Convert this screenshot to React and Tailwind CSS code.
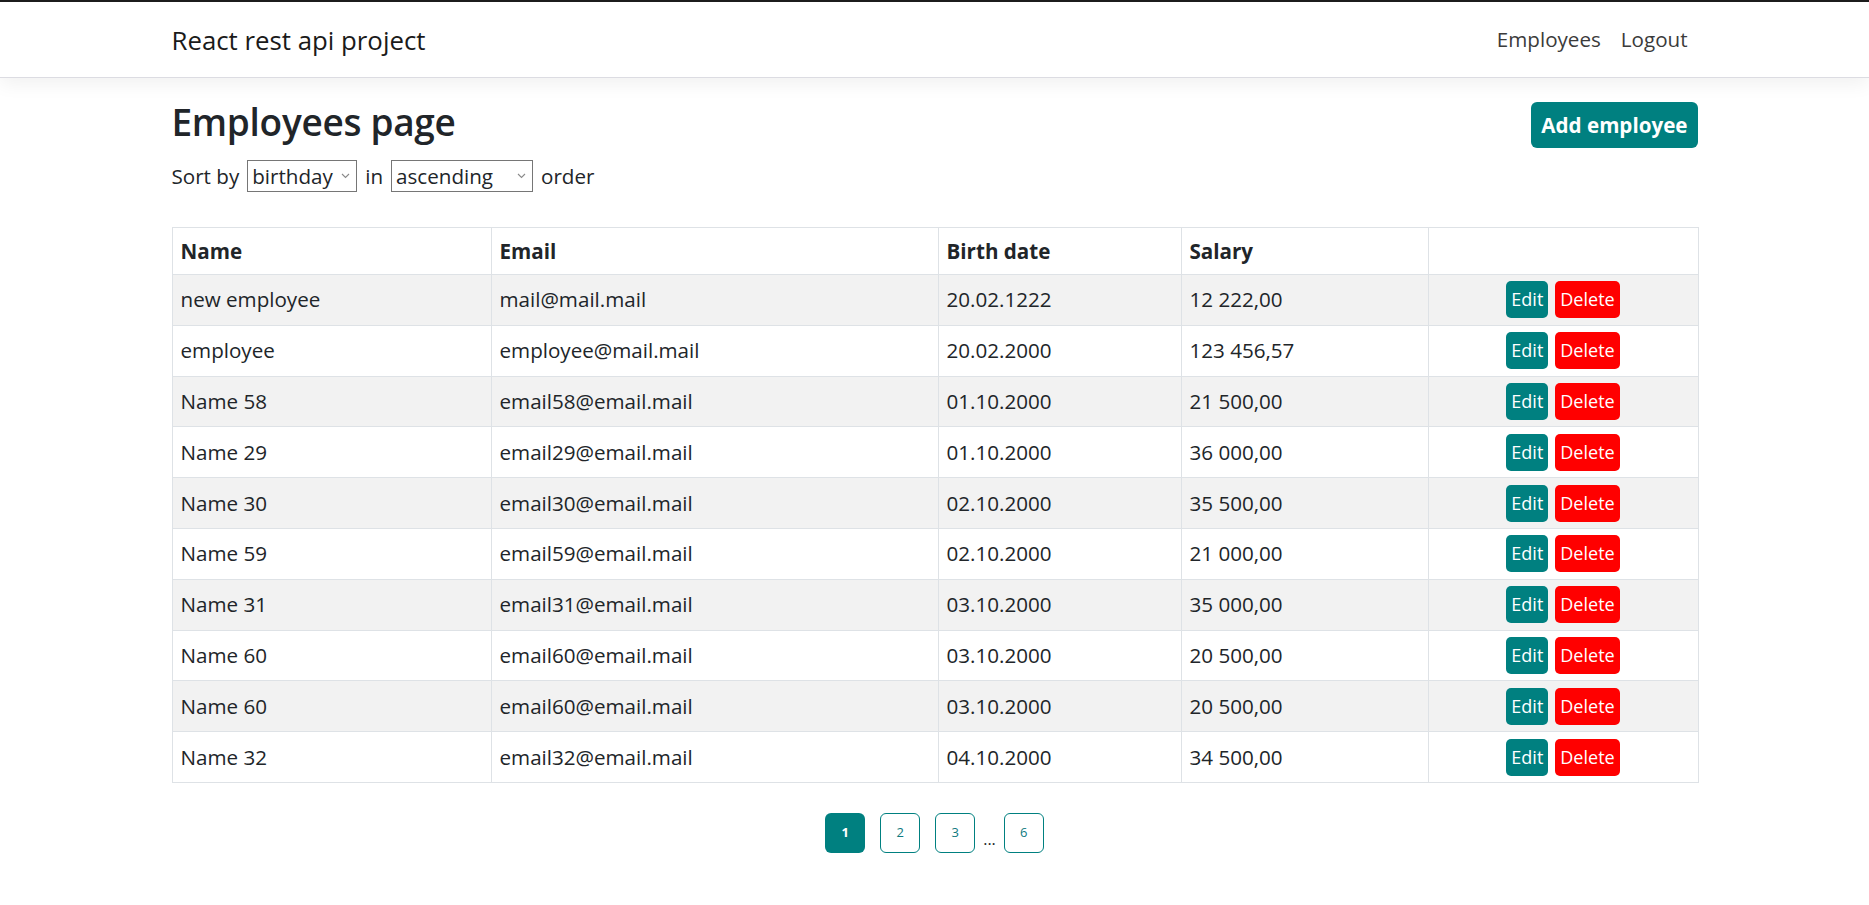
import React from "react";

const rows = [
  ["new employee", "mail@mail.mail", "20.02.1222", "12 222,00"],
  ["employee", "employee@mail.mail", "20.02.2000", "123 456,57"],
  ["Name 58", "email58@email.mail", "01.10.2000", "21 500,00"],
  ["Name 29", "email29@email.mail", "01.10.2000", "36 000,00"],
  ["Name 30", "email30@email.mail", "02.10.2000", "35 500,00"],
  ["Name 59", "email59@email.mail", "02.10.2000", "21 000,00"],
  ["Name 31", "email31@email.mail", "03.10.2000", "35 000,00"],
  ["Name 60", "email60@email.mail", "03.10.2000", "20 500,00"],
  ["Name 60", "email60@email.mail", "03.10.2000", "20 500,00"],
  ["Name 32", "email32@email.mail", "04.10.2000", "34 500,00"],
];

function Chevron() {
  return (
    <svg width="9" height="6" viewBox="0 0 9 6" className="shrink-0">
      <path d="M1 1 L4.5 4.5 L8 1" fill="none" stroke="#8a8a8a" strokeWidth="1.1" />
    </svg>
  );
}

function FakeSelect({ value, width }) {
  return (
    <div
      className={`inline-flex h-[32px] items-center justify-between border border-[#767676] bg-white pl-[4px] pr-[6px] ${width}`}
    >
      <span className="leading-[30px]">{value}</span>
      <Chevron />
    </div>
  );
}

export default function App() {
  return (
    <div className="min-h-screen bg-white font-['Open_Sans',sans-serif] text-[20.6px] text-[#212529]">
      <nav className="relative z-10 h-[78px] border-t-2 border-b border-t-[#1c1c1c] border-b-[#dcdce2] bg-white shadow-[0_6px_18px_rgba(0,0,0,0.06)]">
        <div className="mx-auto flex h-full w-[1526px] items-center justify-between">
          <span className="text-[25.8px] leading-[36px] text-[#1a1a1a]">React rest api project</span>
          <div className="flex items-center text-[20.6px] text-[#3b3b3b]">
            <span className="px-[10px]">Employees</span>
            <span className="pl-[10px] pr-[10px]">Logout</span>
          </div>
        </div>
      </nav>

      <main className="mx-auto w-[1526px] pt-[20px]">
        <div className="flex items-start justify-between">
          <div>
            <h2 className="text-[37px] font-semibold leading-[48px] tracking-[-0.3px]">Employees page</h2>
            <div className="mt-[14px] flex items-center gap-[8px] leading-[30px]">
              <span>Sort by</span>
              <FakeSelect value="birthday" width="w-[110px]" />
              <span>in</span>
              <FakeSelect value="ascending" width="w-[142px]" />
              <span>order</span>
            </div>
          </div>
          <button className="mt-[4px] h-[46px] rounded-[6px] bg-[#008080] px-[10px] text-[20.6px] font-bold leading-[30px] text-white">
            Add employee
          </button>
        </div>

        <table className="mt-[35px] w-full table-fixed border-collapse border border-[#dee2e6]">
          <colgroup>
            <col className="w-[319px]" />
            <col className="w-[447px]" />
            <col className="w-[243px]" />
            <col className="w-[247px]" />
            <col className="w-[270px]" />
          </colgroup>
          <thead>
            <tr className="h-[47px]">
              {["Name", "Email", "Birth date", "Salary", ""].map((h, i) => (
                <th key={i} className="border border-[#dee2e6] px-[8px] text-left font-bold">
                  {h}
                </th>
              ))}
            </tr>
          </thead>
          <tbody>
            {rows.map((r, i) => (
              <tr key={i} className={`h-[50.8px] ${i % 2 === 0 ? "bg-[#f2f2f2]" : "bg-white"}`}>
                {r.map((c, j) => (
                  <td key={j} className="border border-[#dee2e6] px-[8px]">
                    {c}
                  </td>
                ))}
                <td className="border border-[#dee2e6] px-[8px]">
                  <div className="flex items-center justify-center gap-[7px]">
                    <button className="h-[37px] rounded-[5px] bg-[#008080] px-[5px] text-[18px] leading-[37px] text-white">
                      Edit
                    </button>
                    <button className="h-[37px] rounded-[5px] bg-[#ff0000] px-[5px] text-[18px] leading-[37px] text-white">
                      Delete
                    </button>
                  </div>
                </td>
              </tr>
            ))}
          </tbody>
        </table>

        <div className="mt-[30px] flex items-center justify-center text-[13px]">
          <button className="h-[40px] w-[40px] rounded-[6px] bg-[#008080] font-bold text-white">1</button>
          <button className="ml-[15px] h-[40px] w-[40px] rounded-[6px] border border-[#008080] bg-white text-[#0f7a80]">2</button>
          <button className="ml-[15px] h-[40px] w-[40px] rounded-[6px] border border-[#008080] bg-white text-[#0f7a80]">3</button>
          <span className="mx-[8px] self-end pb-[6px] text-[16px] leading-none text-[#212529]">...</span>
          <button className="h-[40px] w-[40px] rounded-[6px] border border-[#008080] bg-white text-[#0f7a80]">6</button>
        </div>
      </main>
    </div>
  );
}
